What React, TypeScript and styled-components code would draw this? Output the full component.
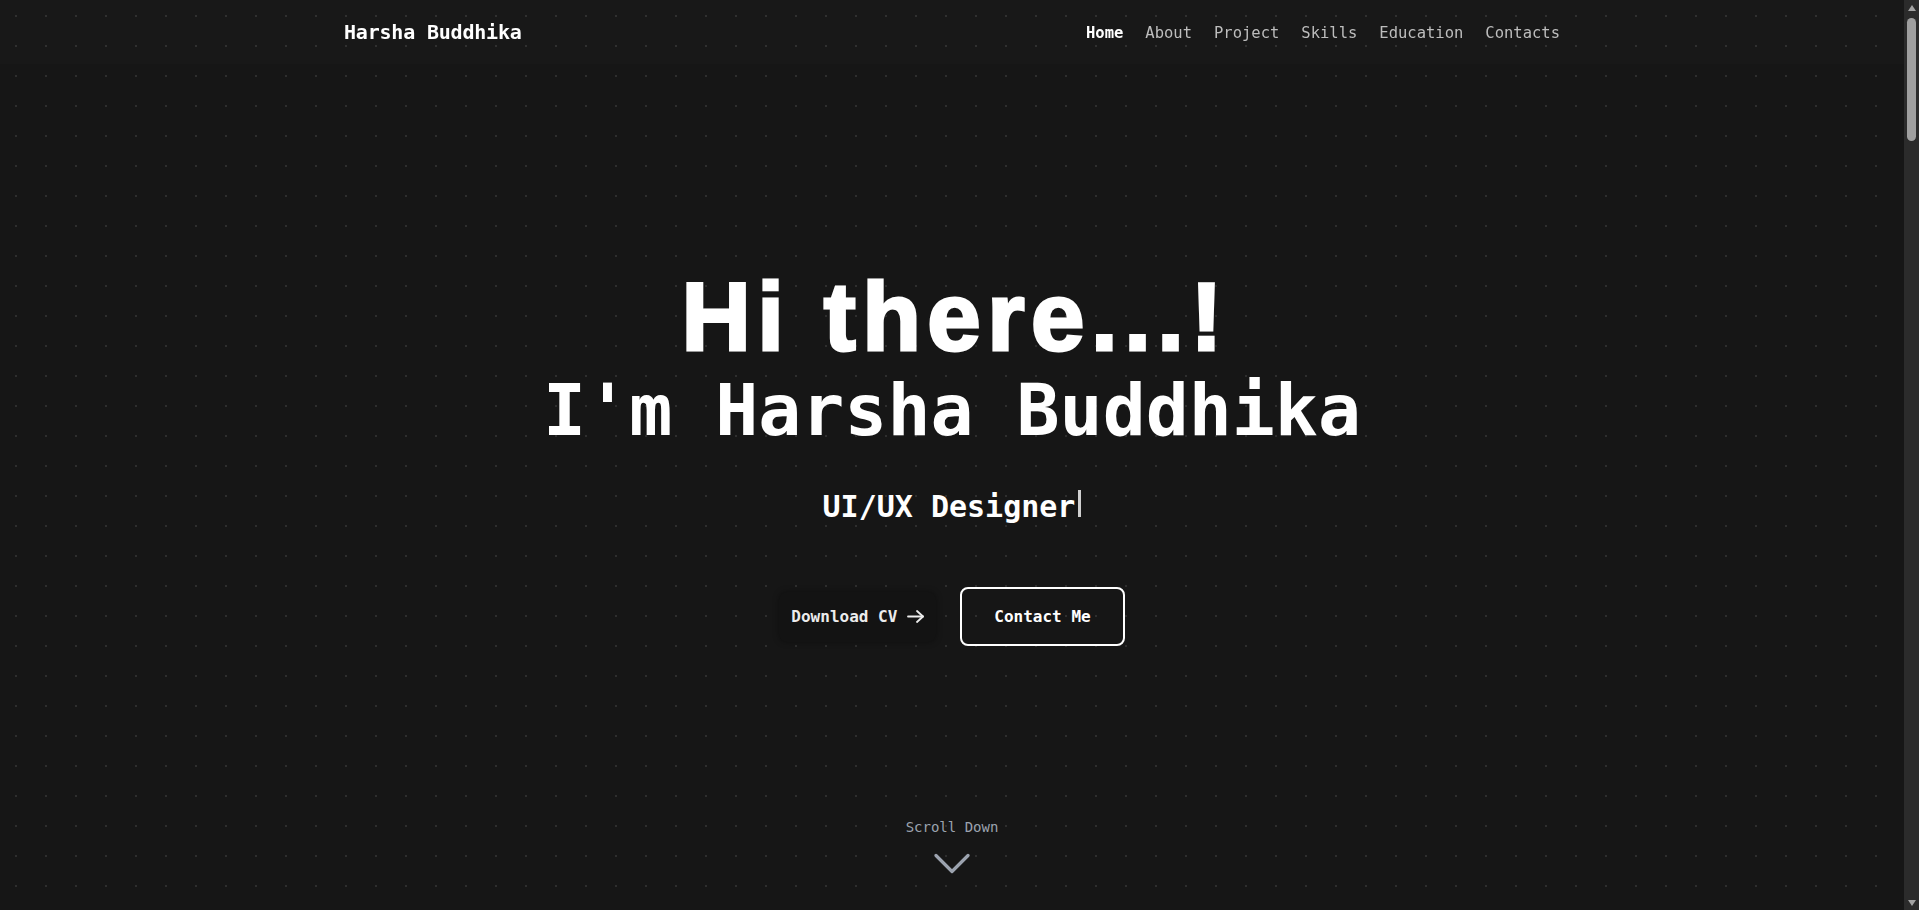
import React from "react";
import styled, { createGlobalStyle } from "styled-components";

const GlobalStyle = createGlobalStyle`
  html { color-scheme: dark; }
  *, *::before, *::after { box-sizing: border-box; }
  html, body { height: 100%; overflow: hidden; }
  body {
    margin: 0;
    background-color: #161616;
    background-image: radial-gradient(circle at center, #2e2e2e 1px, transparent 1.3px);
    background-size: 30px 30px;
    background-position: 1px 1px;
    font-family: "DejaVu Sans Mono", "Liberation Mono", monospace;
    color: #ffffff;
  }
`;

const Frame = styled.div`
  display: flex;
  height: 100vh;
`;

const Main = styled.main`
  flex: 1;
  min-width: 0;
`;

const ScrollRail = styled.div`
  flex: none;
  width: 15px;
  height: 100%;
  background: #2b2b2b;
  display: flex;
  flex-direction: column;
  align-items: center;
`;

const RailButton = styled.div<{ $down?: boolean }>`
  flex: none;
  height: 15px;
  width: 100%;
  display: flex;
  align-items: center;
  justify-content: center;
  margin-top: ${(p) => (p.$down ? "auto" : "0")};

  &::before {
    content: "";
    width: 0;
    height: 0;
    border-left: 4.5px solid transparent;
    border-right: 4.5px solid transparent;
    ${(p) =>
      p.$down
        ? "border-top: 6px solid #a3a3a3; margin-bottom: -1px;"
        : "border-bottom: 6px solid #a3a3a3; margin-top: 1px;"}
  }
`;

const RailThumb = styled.div`
  flex: none;
  width: 9px;
  height: 123px;
  margin-top: 3px;
  border-radius: 5px;
  background: #9f9f9f;
`;

const NavBar = styled.header`
  position: fixed;
  top: 0;
  left: 0;
  right: 15px;
  height: 64px;
  background: rgba(255, 255, 255, 0.012);
  z-index: 10;
`;

const NavInner = styled.nav`
  max-width: 1280px;
  height: 100%;
  margin: 0 auto;
  padding: 0 32px;
  display: flex;
  align-items: center;
  justify-content: space-between;
`;

const Logo = styled.a`
  font-size: 20px;
  font-weight: 700;
  color: #ffffff;
  text-decoration: none;
  letter-spacing: -0.2px;
`;

const NavList = styled.ul`
  display: flex;
  gap: 22px;
  list-style: none;
  margin: 0;
  padding: 0;
`;

const NavLink = styled.a<{ $active?: boolean }>`
  font-size: 15.5px;
  font-weight: ${(p) => (p.$active ? 700 : 400)};
  color: ${(p) => (p.$active ? "#ffffff" : "#bdbdbd")};
  text-decoration: none;
`;

const Hero = styled.section`
  height: 100vh;
  display: grid;
  grid-template-rows: 1fr auto 1fr;
  justify-items: center;
`;

const HeroContent = styled.div`
  grid-row: 2;
  display: flex;
  flex-direction: column;
  align-items: center;
  padding-top: 5px;
`;

const Greeting = styled.h1`
  margin: 0;
  font-family: "Liberation Sans", Arial, sans-serif;
  font-size: 96px;
  font-weight: 700;
  line-height: 1;
  letter-spacing: 6.5px;
  margin-right: -6.5px;
  -webkit-text-stroke: 3px #ffffff;
  color: #ffffff;
`;

const Name = styled.h2`
  margin: 10px 0 0;
  font-size: 71.5px;
  font-weight: 700;
  line-height: 1;
  color: #ffffff;
`;

const Role = styled.p`
  margin: 43px 0 0;
  font-size: 30px;
  font-weight: 700;
  line-height: 1.2;
  color: #ffffff;
`;

const Cursor = styled.span`
  display: inline-block;
  width: 3px;
  height: 27px;
  margin-left: 3px;
  background: #cfcfcf;
  vertical-align: baseline;
`;

const Actions = styled.div`
  display: flex;
  align-items: center;
  gap: 24px;
  margin-top: 62px;
`;

const GhostButton = styled.a`
  display: flex;
  align-items: center;
  gap: 10px;
  padding: 13px 12px;
  border-radius: 8px;
  background: #131313;
  box-shadow: 0 0 6px rgba(0, 0, 0, 0.35);
  font-size: 16px;
  font-weight: 700;
  line-height: 24px;
  color: #ececec;
  text-decoration: none;
`;

const OutlineButton = styled.a`
  display: inline-block;
  padding: 16px 32px;
  border: 2px solid #ffffff;
  border-radius: 8px;
  font-size: 16px;
  font-weight: 700;
  line-height: 23px;
  color: #ffffff;
  text-decoration: none;
`;

const ScrollHint = styled.div`
  grid-row: 3;
  align-self: end;
  display: flex;
  flex-direction: column;
  align-items: center;
  gap: 16px;
  padding-bottom: 36px;
  color: #9ca3af;
`;

const ScrollText = styled.span`
  font-size: 14px;
  line-height: 20px;
`;

const Arrow = () => (
  <svg width="17" height="13" viewBox="0 0 17 13" fill="none" stroke="currentColor" strokeWidth="1.8" strokeLinecap="round" strokeLinejoin="round">
    <path d="M1 6.5h15" />
    <path d="M10 1l6 5.5-6 5.5" />
  </svg>
);

const Chevron = () => (
  <svg width="36" height="21" viewBox="0 0 36 21" fill="none" stroke="currentColor" strokeWidth="3.2" strokeLinecap="round" strokeLinejoin="round">
    <path d="M2 2.5l16 16 16-16" />
  </svg>
);

const links = ["Home", "About", "Project", "Skills", "Education", "Contacts"];

export default function App() {
  return (
    <>
      <GlobalStyle />
      <Frame>
        <Main>
          <NavBar>
            <NavInner>
              <Logo href="#home">Harsha Buddhika</Logo>
              <NavList>
                {links.map((l) => (
                  <li key={l}>
                    <NavLink href={`#${l.toLowerCase()}`} $active={l === "Home"}>
                      {l}
                    </NavLink>
                  </li>
                ))}
              </NavList>
            </NavInner>
          </NavBar>
          <Hero id="home">
            <HeroContent>
              <Greeting>Hi there...!</Greeting>
              <Name>I'm Harsha Buddhika</Name>
              <Role>
                UI/UX Designer
                <Cursor />
              </Role>
              <Actions>
                <GhostButton href="#cv">
                  Download CV
                  <Arrow />
                </GhostButton>
                <OutlineButton href="#contacts">Contact Me</OutlineButton>
              </Actions>
            </HeroContent>
            <ScrollHint>
              <ScrollText>Scroll Down</ScrollText>
              <Chevron />
            </ScrollHint>
          </Hero>
        </Main>
        <ScrollRail aria-hidden="true">
          <RailButton />
          <RailThumb />
          <RailButton $down />
        </ScrollRail>
      </Frame>
    </>
  );
}
